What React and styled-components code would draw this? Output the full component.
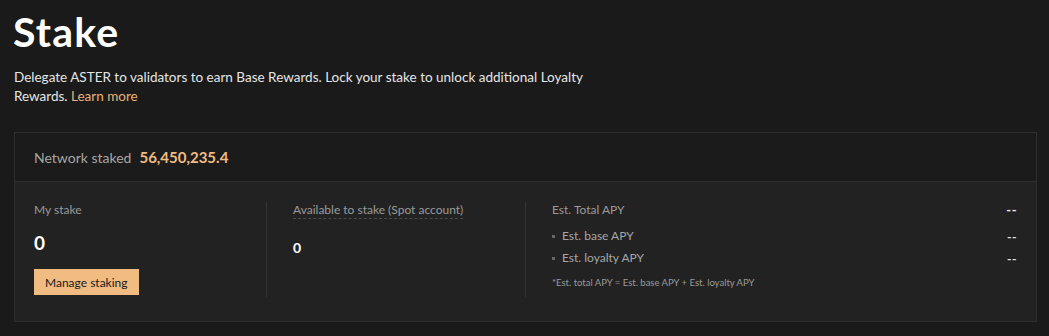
import styled, { createGlobalStyle } from "styled-components";

const Global = createGlobalStyle`
  html, body {
    margin: 0;
    padding: 0;
    background: #1a1a1a;
  }
  body {
    font-family: "Lato", "Noto Sans", sans-serif;
    color: #ffffff;
  }
`;

const Page = styled.div`
  padding: 10px 12px 15px 14px;
  background: #1a1a1a;
  min-height: 336px;
  box-sizing: border-box;
`;

const Title = styled.h1`
  margin: 0;
  font-size: 41px;
  line-height: 44px;
  font-weight: 700;
  letter-spacing: 1.2px;
  margin-left: -1px;
`;

const Intro = styled.p`
  margin: 14px 0 0;
  max-width: 590px;
  font-size: 13.5px;
  line-height: 19px;
  color: #e6e6e6;
`;

const LearnMore = styled.a`
  color: #e8b27a;
  text-decoration: none;
`;

const Card = styled.div`
  margin-top: 26px;
  border: 1px solid #2e2e2e;
  width: 1023px;
  box-sizing: border-box;
`;

const CardHead = styled.div`
  height: 48px;
  display: flex;
  align-items: center;
  gap: 8px;
  padding: 0 19px;
  border-bottom: 1px solid #2e2e2e;
  background: #1b1b1b;
`;

const HeadLabel = styled.span`
  font-size: 14px;
  color: #a6a6a6;
`;

const HeadValue = styled.span`
  font-size: 15px;
  font-weight: 700;
  color: #f0bc82;
`;

const CardBody = styled.div`
  display: grid;
  grid-template-columns: 232px 259px 1fr;
  padding: 20px 19px 24px;
  background: #222222;
`;

const Col = styled.div`
  display: flex;
  flex-direction: column;
  align-items: flex-start;
  padding: ${(p) => (p.$first ? "0" : "0 0 0 26px")};
  border-left: ${(p) => (p.$first ? "none" : "1px solid #333333")};
  min-height: 95px;
`;

const Label = styled.span`
  font-size: 12px;
  line-height: 16px;
  color: #9a9a9a;
  border-bottom: ${(p) => (p.$dashed ? "1px dashed #4a4a4a" : "none")};
`;

const BigValue = styled.span`
  margin-top: 14px;
  font-size: 19px;
  font-weight: 700;
  line-height: 22px;
`;

const SmallValue = styled.span`
  margin-top: 20px;
  font-size: 14px;
  font-weight: 700;
  line-height: 18px;
`;

const Button = styled.button`
  margin-top: 15px;
  height: 26px;
  padding: 0 11px;
  border: none;
  background: #f0bc82;
  color: #1a1a1a;
  font-family: inherit;
  font-size: 12px;
  cursor: pointer;
`;

const ApyCol = styled(Col)`
  align-items: stretch;
`;

const Row = styled.div`
  display: flex;
  justify-content: space-between;
  align-items: center;
  margin-top: ${(p) => p.$mt || 0}px;
`;

const SubLabel = styled.span`
  display: flex;
  align-items: center;
  gap: 7px;
  font-size: 12px;
  line-height: 16px;
  color: #a6a6a6;
  &::before {
    content: "";
    width: 3px;
    height: 3px;
    background: #666;
  }
`;

const Dash = styled.span`
  font-size: ${(p) => (p.$big ? 13 : 12)}px;
  font-weight: 700;
  letter-spacing: 0.5px;
  color: #e6e6e6;
`;

const Note = styled.span`
  margin-top: 11px;
  font-size: 9.5px;
  color: #9a9a9a;
`;

export default function App() {
  return (
    <Page>
      <Global />
      <Title>Stake</Title>
      <Intro>
        Delegate ASTER to validators to earn Base Rewards. Lock your stake to unlock additional Loyalty
        Rewards. <LearnMore href="#">Learn more</LearnMore>
      </Intro>
      <Card>
        <CardHead>
          <HeadLabel>Network staked</HeadLabel>
          <HeadValue>56,450,235.4</HeadValue>
        </CardHead>
        <CardBody>
          <Col $first>
            <Label>My stake</Label>
            <BigValue>0</BigValue>
            <Button>Manage staking</Button>
          </Col>
          <Col>
            <Label $dashed>Available to stake (Spot account)</Label>
            <SmallValue>0</SmallValue>
          </Col>
          <ApyCol>
            <Row>
              <Label>Est. Total APY</Label>
              <Dash $big>--</Dash>
            </Row>
            <Row $mt={10}>
              <SubLabel>Est. base APY</SubLabel>
              <Dash>--</Dash>
            </Row>
            <Row $mt={6}>
              <SubLabel>Est. loyalty APY</SubLabel>
              <Dash>--</Dash>
            </Row>
            <Note>*Est. total APY = Est. base APY + Est. loyalty APY</Note>
          </ApyCol>
        </CardBody>
      </Card>
    </Page>
  );
}
